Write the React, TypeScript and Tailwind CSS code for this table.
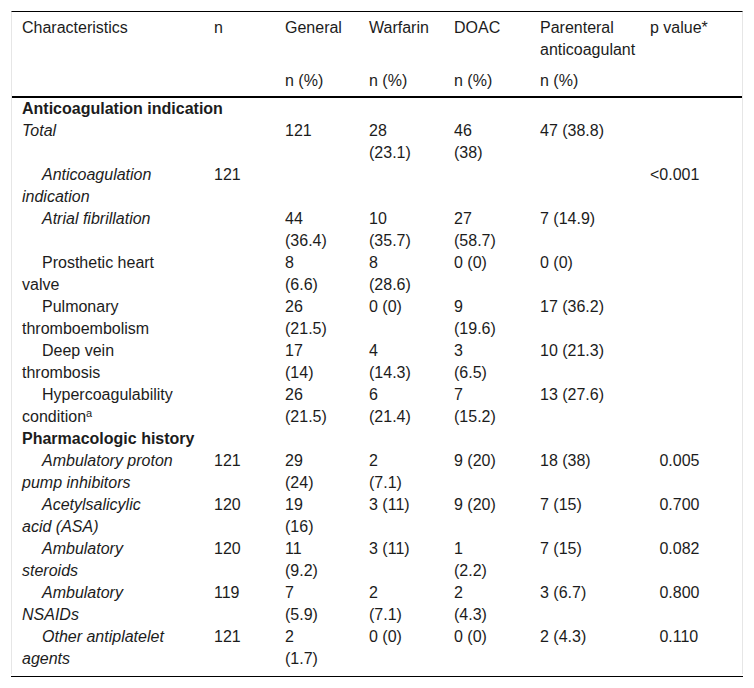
import React from 'react';

type Row = {
  label?: string;
  section?: string;
  italic?: boolean;
  indent?: boolean;
  sup?: string;
  n?: string;
  general?: string;
  warfarin?: string;
  doac?: string;
  parenteral?: string;
  p?: string;
  shiftP?: boolean;
};

const rows: Row[] = [
  { section: 'Anticoagulation indication' },
  { label: 'Total', italic: true, general: '121', warfarin: '28 (23.1)', doac: '46 (38)', parenteral: '47 (38.8)' },
  { label: 'Anticoagulation indication', italic: true, indent: true, n: '121', p: '<0.001' },
  { label: 'Atrial fibrillation', italic: true, indent: true, general: '44 (36.4)', warfarin: '10 (35.7)', doac: '27 (58.7)', parenteral: '7 (14.9)' },
  { label: 'Prosthetic heart valve', indent: true, general: '8 (6.6)', warfarin: '8 (28.6)', doac: '0 (0)', parenteral: '0 (0)' },
  { label: 'Pulmonary thromboembolism', indent: true, general: '26 (21.5)', warfarin: '0 (0)', doac: '9 (19.6)', parenteral: '17 (36.2)' },
  { label: 'Deep vein thrombosis', indent: true, general: '17 (14)', warfarin: '4 (14.3)', doac: '3 (6.5)', parenteral: '10 (21.3)' },
  { label: 'Hypercoagulability condition', sup: 'a', indent: true, general: '26 (21.5)', warfarin: '6 (21.4)', doac: '7 (15.2)', parenteral: '13 (27.6)' },
  { section: 'Pharmacologic history' },
  { label: 'Ambulatory proton pump inhibitors', italic: true, indent: true, n: '121', general: '29 (24)', warfarin: '2 (7.1)', doac: '9 (20)', parenteral: '18 (38)', p: '0.005', shiftP: true },
  { label: 'Acetylsalicylic acid (ASA)', italic: true, indent: true, n: '120', general: '19 (16)', warfarin: '3 (11)', doac: '9 (20)', parenteral: '7 (15)', p: '0.700', shiftP: true },
  { label: 'Ambulatory steroids', italic: true, indent: true, n: '120', general: '11 (9.2)', warfarin: '3 (11)', doac: '1 (2.2)', parenteral: '7 (15)', p: '0.082', shiftP: true },
  { label: 'Ambulatory NSAIDs', italic: true, indent: true, n: '119', general: '7 (5.9)', warfarin: '2 (7.1)', doac: '2 (4.3)', parenteral: '3 (6.7)', p: '0.800', shiftP: true },
  { label: 'Other antiplatelet agents', italic: true, indent: true, n: '121', general: '2 (1.7)', warfarin: '0 (0)', doac: '0 (0)', parenteral: '2 (4.3)', p: '0.110', shiftP: true },
];

// padding per column: the count columns are kept narrow so "n (%)" breaks like the source
const cell = [
  'pl-[10px] pr-[30.4px]',
  'pl-[10px]',
  'pl-[10px] pr-[30px]',
  'pl-[10px] pr-[31px]',
  'pl-[10px] pr-[32px]',
  'pl-[10px]',
  'pl-[10px]',
];

export default function App() {
  return (
    <div className="min-h-screen bg-white pt-[11px] pl-[11px] font-['Liberation_Sans',Arial,sans-serif] text-[16px] leading-[22px] text-[#1c1c1c]">
      <div className="w-[732px] border-t border-x border-t-black border-x-[#e6e6e6] pb-[4px]">
        <table className="w-[730px] table-fixed">
          <colgroup>
            <col className="w-[192px]" />
            <col className="w-[71px]" />
            <col className="w-[84px]" />
            <col className="w-[85px]" />
            <col className="w-[86px]" />
            <col className="w-[110px]" />
            <col className="w-[102px]" />
          </colgroup>
          <thead>
            <tr className="text-left align-top">
              {['Characteristics', 'n', 'General', 'Warfarin', 'DOAC', 'Parenteral anticoagulant', 'p value*'].map((h, i) => (
                <th key={h} className={`${cell[i]} pt-[5px] pb-[4px] font-normal`}>{h}</th>
              ))}
            </tr>
            <tr className="text-left align-top border-b-2 border-black">
              {['', '', 'n (%)', 'n (%)', 'n (%)', 'n (%)', ''].map((h, i) => (
                <th key={i} className={`${cell[i]} pt-[5px] pb-[4px] font-normal`}>{h}</th>
              ))}
            </tr>
          </thead>
          <tbody>
            {rows.map((r, idx) =>
              r.section ? (
                <tr key={idx}>
                  <td colSpan={7} className="pl-[10px] font-bold">{r.section}</td>
                </tr>
              ) : (
                <tr key={idx} className="align-top">
                  <td className={`${cell[0]} ${r.italic ? 'italic' : ''} ${r.indent ? 'indent-[20px]' : ''}`}>
                    {r.label}
                    {r.sup && <sup className="text-[11px]">{r.sup}</sup>}
                  </td>
                  <td className={cell[1]}>{r.n}</td>
                  <td className={cell[2]}>{r.general}</td>
                  <td className={cell[3]}>{r.warfarin}</td>
                  <td className={cell[4]}>{r.doac}</td>
                  <td className={cell[5]}>{r.parenteral}</td>
                  <td className={cell[6]}>
                    {r.shiftP ? <span className="pl-[9.4px]">{r.p}</span> : r.p}
                  </td>
                </tr>
              )
            )}
          </tbody>
        </table>
      </div>
      <div className="mt-[2px] h-px w-[732px] bg-black" />
    </div>
  );
}
